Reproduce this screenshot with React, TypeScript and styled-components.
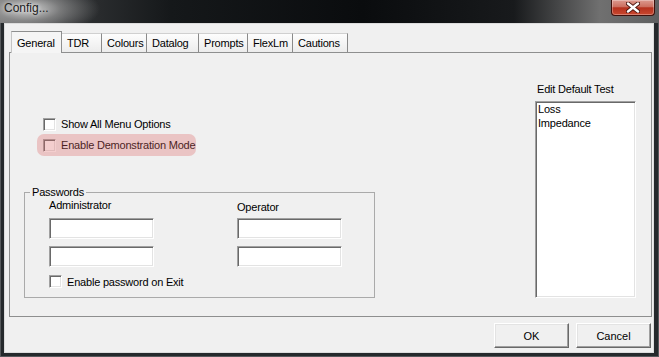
import React from 'react';
import styled, { createGlobalStyle, css } from 'styled-components';

const GlobalStyle = createGlobalStyle`
    body {
        margin: 0;
        background: #fff;
    }
`;

const Window = styled.div`
    width: 659px;
    height: 357px;
    box-sizing: border-box;
    display: flex;
    flex-direction: column;
    background: #25292c;
    box-shadow: inset 0 0 0 1px #56595c;
    font-family: 'Liberation Sans', Arial, sans-serif;
    font-size: 11px;
    letter-spacing: -0.2px;
    color: #000;
    overflow: hidden;
`;

const TitleBar = styled.div`
    height: 23px;
    flex: none;
    display: flex;
    align-items: flex-start;
    background: radial-gradient(
            ellipse 72px 26px at 28px 9px,
            rgba(214, 214, 214, 0.95) 0%,
            rgba(165, 165, 165, 0.6) 45%,
            rgba(120, 120, 120, 0) 100%
        ),
        linear-gradient(
            90deg,
            #6a6a6a 0%,
            #323436 10%,
            #15181a 26%,
            #0a0c0e 55%,
            #181a1c 78%,
            #707070 91%,
            #5e5f60 100%
        );
`;

const Title = styled.span`
    padding: 1px 0 0 4px;
    font-size: 12px;
    line-height: 15px;
    letter-spacing: 0;
    color: #1c1c1c;
    text-shadow: 0 0 4px rgba(255, 255, 255, 0.75);
`;

const CloseButton = styled.div`
    margin-left: auto;
    margin-right: 4px;
    width: 44px;
    height: 16px;
    box-sizing: border-box;
    border: 1px solid #3e100b;
    border-top: none;
    border-radius: 0 0 4px 4px;
    background: linear-gradient(#dc9a8f 0%, #cc6f60 45%, #b5311e 52%, #c9482f 100%);
    box-shadow: inset 0 0 0 1px rgba(255, 255, 255, 0.3);
    display: flex;
    align-items: center;
    justify-content: center;
`;

const Client = styled.div`
    flex: 1;
    margin: 0 5px 4px 4px;
    display: flex;
    flex-direction: column;
    background: #f0f0f0;
    border: 1px solid #dcdcdc;
    padding: 7px 1px 0 4px;
`;

const TabStrip = styled.div`
    height: 21px;
    display: flex;
    align-items: flex-end;
    padding-left: 2px;
`;

const Tab = styled.div<{ $w: number; $active?: boolean }>`
    width: ${(p) => p.$w}px;
    box-sizing: border-box;
    padding-left: 5px;
    white-space: nowrap;
    display: flex;
    align-items: center;
    ${(p) =>
        p.$active
            ? css`
                  height: 22px;
                  margin-bottom: -1px;
                  position: relative;
                  z-index: 1;
                  background: #f5f5f5;
                  border: 1px solid #8e8f8f;
                  border-left-color: #c4c4c4;
                  border-bottom: none;
              `
            : css`
                  height: 19px;
                  background: linear-gradient(#fdfdfd, #ececec);
                  border-top: 1px solid #d0d0d0;
                  border-right: 1px solid #8a8a8a;
              `}
`;

const Panel = styled.div`
    height: 265px;
    box-sizing: border-box;
    border: 1px solid #8e8f8f;
    background: #f0f0f0;
    display: flex;
`;

const LeftCol = styled.div`
    padding: 61px 0 0 14px;
    display: flex;
    flex-direction: column;
`;

const OptionList = styled.div`
    margin-left: 13px;
    display: flex;
    flex-direction: column;
`;

const OptionRow = styled.label<{ $h: number; $marked?: boolean }>`
    position: relative;
    display: flex;
    align-items: center;
    gap: 5px;
    width: 159px;
    height: ${(p) => p.$h}px;
    box-sizing: border-box;
    padding-left: 6px;
    white-space: nowrap;
    ${(p) =>
        p.$marked &&
        css`
            &::after {
                content: '';
                position: absolute;
                inset: 0;
                border-radius: 7px;
                background: rgba(222, 104, 104, 0.32);
            }
        `}
`;

const sunken = css`
    box-sizing: border-box;
    background: #fff;
    border: 1px solid;
    border-color: #a0a0a0 #fff #fff #a0a0a0;
    box-shadow: inset 1px 1px #696969, inset -1px -1px #e3e3e3;
`;

const Checkbox = styled.span`
    ${sunken};
    width: 13px;
    height: 13px;
    flex: none;
`;

const Group = styled.fieldset`
    margin: 30px 0 0;
    padding: 0;
    min-width: 0;
    width: 351px;
    height: 112px;
    box-sizing: border-box;
    border: 1px solid #aaaaaa;
`;

const Legend = styled.legend`
    margin-left: 5px;
    padding: 0 2px;
    line-height: 13px;
`;

const PasswordGrid = styled.div`
    display: grid;
    grid-template-columns: 105px 105px;
    grid-template-rows: 12px 21px 21px;
    column-gap: 83px;
    row-gap: 7px;
    margin-left: 24px;
`;

const FieldLabel = styled.span<{ $drop?: number }>`
    line-height: 12px;
    white-space: nowrap;
    padding-top: ${(p) => p.$drop ?? 0}px;
`;

const TextBox = styled.input`
    ${sunken};
    width: 105px;
    height: 21px;
    margin: 0;
    padding: 0 3px;
    font: inherit;
    outline: none;
`;

const ExitRow = styled.label`
    display: flex;
    align-items: center;
    gap: 5px;
    height: 13px;
    margin: 8px 0 0 24px;
    white-space: nowrap;
`;

const RightCol = styled.div`
    width: 101px;
    margin-left: auto;
    margin-right: 15px;
    padding-top: 30px;
    display: flex;
    flex-direction: column;
`;

const ListCaption = styled.span`
    padding-left: 2px;
    line-height: 13px;
    margin-bottom: 5px;
    white-space: nowrap;
`;

const ListBox = styled.div`
    ${sunken};
    width: 101px;
    height: 197px;
    padding: 0 2px;
`;

const ListItem = styled.div`
    line-height: 14px;
`;

const ButtonRow = styled.div`
    display: flex;
    justify-content: flex-end;
    gap: 7px;
    padding: 6px 1px 0 0;
`;

const Button = styled.button`
    width: 75px;
    height: 25px;
    box-sizing: border-box;
    margin: 0;
    padding: 0;
    font: inherit;
    color: #000;
    background: #f0f0f0;
    border: 1px solid;
    border-color: #fff #696969 #696969 #fff;
    box-shadow: inset -1px -1px #a0a0a0, inset 1px 1px #e3e3e3;
`;

const tabs = [
    { label: 'General', w: 51 },
    { label: 'TDR', w: 40 },
    { label: 'Colours', w: 45 },
    { label: 'Datalog', w: 52 },
    { label: 'Prompts', w: 49 },
    { label: 'FlexLm', w: 45 },
    { label: 'Cautions', w: 55 },
];

function App() {
    return (
        <>
            <GlobalStyle />
            <Window>
                <TitleBar>
                    <Title>Config...</Title>
                    <CloseButton>
                        <svg width="14" height="11" viewBox="0 0 14 11">
                            <path d="M2 1.5 L12 9.5 M12 1.5 L2 9.5" stroke="#4a140e" strokeWidth="4.2" strokeLinecap="round" />
                            <path d="M2 1.5 L12 9.5 M12 1.5 L2 9.5" stroke="#fff" strokeWidth="2.4" strokeLinecap="round" />
                        </svg>
                    </CloseButton>
                </TitleBar>
                <Client>
                    <TabStrip>
                        {tabs.map((t, i) => (
                            <Tab key={t.label} $w={t.w} $active={i === 0}>
                                {t.label}
                            </Tab>
                        ))}
                    </TabStrip>
                    <Panel>
                        <LeftCol>
                            <OptionList>
                                <OptionRow $h={20}>
                                    <Checkbox />
                                    Show All Menu Options
                                </OptionRow>
                                <OptionRow $h={22} $marked>
                                    <Checkbox />
                                    Enable Demonstration Mode
                                </OptionRow>
                            </OptionList>
                            <Group>
                                <Legend>Passwords</Legend>
                                <PasswordGrid>
                                    <FieldLabel>Administrator</FieldLabel>
                                    <FieldLabel $drop={2}>Operator</FieldLabel>
                                    <TextBox type="password" />
                                    <TextBox type="password" />
                                    <TextBox type="password" />
                                    <TextBox type="password" />
                                </PasswordGrid>
                                <ExitRow>
                                    <Checkbox />
                                    Enable password on Exit
                                </ExitRow>
                            </Group>
                        </LeftCol>
                        <RightCol>
                            <ListCaption>Edit Default Test</ListCaption>
                            <ListBox>
                                <ListItem>Loss</ListItem>
                                <ListItem>Impedance</ListItem>
                            </ListBox>
                        </RightCol>
                    </Panel>
                    <ButtonRow>
                        <Button>OK</Button>
                        <Button>Cancel</Button>
                    </ButtonRow>
                </Client>
            </Window>
        </>
    );
}

export default App;
